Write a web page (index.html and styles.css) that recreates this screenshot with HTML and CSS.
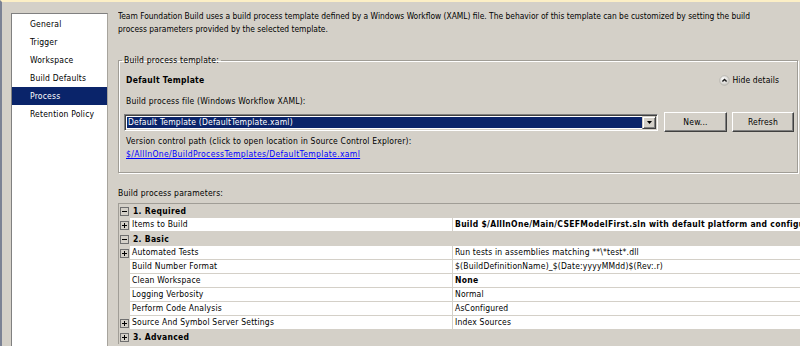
FILE: index.html
```html
<!DOCTYPE html>
<html>
<head>
<meta charset="utf-8">
<link rel="stylesheet" href="styles.css">
</head>
<body>
<div class="window">
  <ul class="nav">
    <li>General</li>
    <li>Trigger</li>
    <li>Workspace</li>
    <li>Build Defaults</li>
    <li class="sel">Process</li>
    <li>Retention Policy</li>
  </ul>
  <div class="main">
    <p class="desc">Team Foundation Build uses a build process template defined by a Windows Workflow (XAML) file. The behavior of this template can be customized by setting the build<br>process parameters provided by the selected template.</p>
    <fieldset class="group">
      <legend>Build process template:</legend>
      <div class="group-body">
        <div class="head">
          <b class="tpl">Default Template</b>
          <span class="hide"><svg class="chev" width="11" height="11" viewBox="0 0 11 11"><defs><radialGradient id="g" cx="0.4" cy="0.35" r="0.7"><stop offset="0" stop-color="#ffffff"/><stop offset="1" stop-color="#c4c2bc"/></radialGradient></defs><circle cx="5.5" cy="5.5" r="4.8" fill="url(#g)" stroke="#b4b2ac" stroke-width="0.8"/><path d="M3.4 6.6 L5.5 4.4 L7.6 6.6" fill="none" stroke="#1a1a1a" stroke-width="1.4"/></svg>Hide details</span>
        </div>
        <div class="label">Build process file (Windows Workflow XAML):</div>
        <div class="combo-row">
          <div class="combo">
            <span class="combo-val">Default Template (DefaultTemplate.xaml)</span>
            <span class="drop"><svg width="5" height="3" viewBox="0 0 5 3"><path d="M0 0 H5 L2.5 3 Z" fill="#000"/></svg></span>
          </div>
          <button class="btn btn-new">New...</button>
          <button class="btn btn-refresh">Refresh</button>
        </div>
        <div class="label vc">Version control path (click to open location in Source Control Explorer):</div>
        <a class="link" href="#">$/AllInOne/BuildProcessTemplates/DefaultTemplate.xaml</a>
      </div>
    </fieldset>
    <div class="label params">Build process parameters:</div>
    <div class="grid">
      <div class="row cat">
        <span class="exp"><svg width="9" height="9" viewBox="0 0 9 9"><rect x="0.5" y="0.5" width="8" height="8" fill="none" stroke="#6f6f6f"/><path d="M2 4.5 H7" stroke="#000"/></svg></span>
        <span class="cname">1. Required</span>
      </div>
      <div class="row">
        <span class="exp"><svg width="9" height="9" viewBox="0 0 9 9"><rect x="0.5" y="0.5" width="8" height="8" fill="none" stroke="#6f6f6f"/><path d="M2 4.5 H7 M4.5 2 V7" stroke="#000"/></svg></span>
        <span class="name">Items to Build</span>
        <span class="val bold">Build $/AllInOne/Main/CSEFModelFirst.sln with default platform and configurations</span>
      </div>
      <div class="row cat">
        <span class="exp"><svg width="9" height="9" viewBox="0 0 9 9"><rect x="0.5" y="0.5" width="8" height="8" fill="none" stroke="#6f6f6f"/><path d="M2 4.5 H7" stroke="#000"/></svg></span>
        <span class="cname">2. Basic</span>
      </div>
      <div class="row">
        <span class="exp"><svg width="9" height="9" viewBox="0 0 9 9"><rect x="0.5" y="0.5" width="8" height="8" fill="none" stroke="#6f6f6f"/><path d="M2 4.5 H7 M4.5 2 V7" stroke="#000"/></svg></span>
        <span class="name">Automated Tests</span>
        <span class="val">Run tests in assemblies matching **\*test*.dll</span>
      </div>
      <div class="row">
        <span class="exp"></span>
        <span class="name">Build Number Format</span>
        <span class="val">$(BuildDefinitionName)_$(Date:yyyyMMdd)$(Rev:.r)</span>
      </div>
      <div class="row">
        <span class="exp"></span>
        <span class="name">Clean Workspace</span>
        <span class="val bold">None</span>
      </div>
      <div class="row">
        <span class="exp"></span>
        <span class="name">Logging Verbosity</span>
        <span class="val">Normal</span>
      </div>
      <div class="row">
        <span class="exp"></span>
        <span class="name">Perform Code Analysis</span>
        <span class="val">AsConfigured</span>
      </div>
      <div class="row">
        <span class="exp"><svg width="9" height="9" viewBox="0 0 9 9"><rect x="0.5" y="0.5" width="8" height="8" fill="none" stroke="#6f6f6f"/><path d="M2 4.5 H7 M4.5 2 V7" stroke="#000"/></svg></span>
        <span class="name">Source And Symbol Server Settings</span>
        <span class="val">Index Sources</span>
      </div>
      <div class="row cat">
        <span class="exp"><svg width="9" height="9" viewBox="0 0 9 9"><rect x="0.5" y="0.5" width="8" height="8" fill="none" stroke="#6f6f6f"/><path d="M2 4.5 H7 M4.5 2 V7" stroke="#000"/></svg></span>
        <span class="cname">3. Advanced</span>
      </div>
    </div>
  </div>
</div>
</body>
</html>
```

FILE: styles.css
```css
html, body {
  margin: 0;
  padding: 0;
}
body {
  width: 800px;
  height: 346px;
  overflow: hidden;
  background: #d4d0c8;
  font-family: "DejaVu Sans Condensed", "DejaVu Sans", sans-serif;
  font-stretch: condensed;
  font-size: 8.5px;
  letter-spacing: 0.19px;
  line-height: 13px;
  color: #000;
}
.window {
  display: flex;
  height: 344px;
  border-top: 2px solid #fcefc6;
  border-left: 2px solid #7b8294;
  background: #d4d0c8;
}
.nav {
  list-style: none;
  margin: 11px 0 0 9px;
  padding: 1px 0 0 0;
  width: 95px;
  flex: none;
  background: #fff;
  border-top: 1px solid #808080;
  border-left: 1px solid #808080;
  border-right: 1px solid #a7a49d;
}
.nav li {
  height: 18px;
  line-height: 18px;
  padding-left: 18px;
  white-space: nowrap;
}
.nav li.sel {
  background: #0a246a;
  color: #fff;
}
.main {
  flex: 1;
  min-width: 0;
  margin-left: 10px;
  overflow: hidden;
}
.desc {
  margin: 8px 0 0 0;
  white-space: nowrap;
  font-size: 8.4px;
  letter-spacing: 0;
}
.group {
  margin: 18px 2px 0 0;
  padding: 0 0 11px 0;
  min-width: 0;
  border: 1px solid #a09d96;
  box-shadow: inset 1px 1px 0 #fff, 1px 1px 0 #fff;
}
.group legend {
  margin-left: 3px;
  padding: 0 2px;
  line-height: 13px;
}
.group-body {
  padding: 0 3px 0 5px;
}
.head {
  display: flex;
  justify-content: space-between;
  align-items: center;
  margin-top: 7px;
  padding: 0 15px 0 2px;
  height: 13px;
}
.tpl {
  font-weight: bold;
}
.hide {
  display: flex;
  align-items: center;
  gap: 2px;
  letter-spacing: 0.1px;
}
.label {
  margin-top: 8px;
  padding-left: 2px;
  white-space: nowrap;
}
.combo-row {
  display: flex;
  align-items: center;
  height: 20px;
  margin-top: 4px;
}
.combo {
  flex: 1;
  display: flex;
  height: 17px;
  box-sizing: border-box;
  border: 1px solid;
  border-color: #808080 #fff #fff #808080;
  box-shadow: inset 1px 1px 0 #404040, inset -1px -1px 0 #d4d0c8;
  background: #fff;
  padding: 2px;
}
.combo-val {
  flex: 1;
  background: #0a246a;
  color: #fff;
  line-height: 11px;
  padding-left: 1px;
  white-space: nowrap;
}
.drop {
  width: 14px;
  margin: -1px -1px -1px 0;
  box-sizing: border-box;
  display: flex;
  align-items: center;
  justify-content: center;
  background: #d4d0c8;
  border: 1px solid;
  border-color: #d4d0c8 #404040 #404040 #d4d0c8;
  box-shadow: inset 1px 1px 0 #fff, inset -1px -1px 0 #808080;
}
.btn {
  font: inherit;
  letter-spacing: inherit;
  color: #000;
  height: 20px;
  margin: 0;
  padding: 0;
  background: #d4d0c8;
  border: 1px solid;
  border-color: #fff #404040 #404040 #fff;
  box-shadow: inset -1px -1px 0 #808080;
  box-sizing: border-box;
}
.btn-new {
  width: 63px;
  margin-left: 6px;
}
.btn-refresh {
  width: 62px;
  margin-left: 5px;
}
.label.vc {
  margin-top: 3px;
}
.link {
  display: block;
  width: max-content;
  margin-left: 2px;
  color: #0000ff;
  text-decoration: underline;
  letter-spacing: 0.35px;
}
.label.params {
  margin-top: 14px;
  padding-left: 0;
}
.grid {
  margin-top: 3px;
  width: 720px;
  border-top: 1px solid #a09d96;
  border-left: 1px solid #a09d96;
  background: #d4d0c8;
}
.row {
  display: flex;
  height: 14px;
  box-sizing: border-box;
}
.exp {
  width: 11px;
  flex: none;
  display: flex;
  align-items: center;
  justify-content: flex-start;
  padding-left: 1px;
  box-sizing: border-box;
}
.exp svg {
  display: block;
}
.name {
  width: 323px;
  flex: none;
  box-sizing: border-box;
  background: #fff;
  border-right: 1px solid #d4d0c8;
  border-bottom: 1px solid #d4d0c8;
  padding-left: 2px;
  line-height: 13px;
  white-space: nowrap;
}
.val {
  flex: 1;
  background: #fff;
  border-bottom: 1px solid #d4d0c8;
  padding-left: 2px;
  line-height: 13px;
  white-space: nowrap;
  overflow: hidden;
}
.bold, .cname, .tpl {
  font-weight: bold;
  letter-spacing: 0.3px;
}
.cname {
  padding-left: 3px;
  line-height: 14px;
  white-space: nowrap;
}
```
